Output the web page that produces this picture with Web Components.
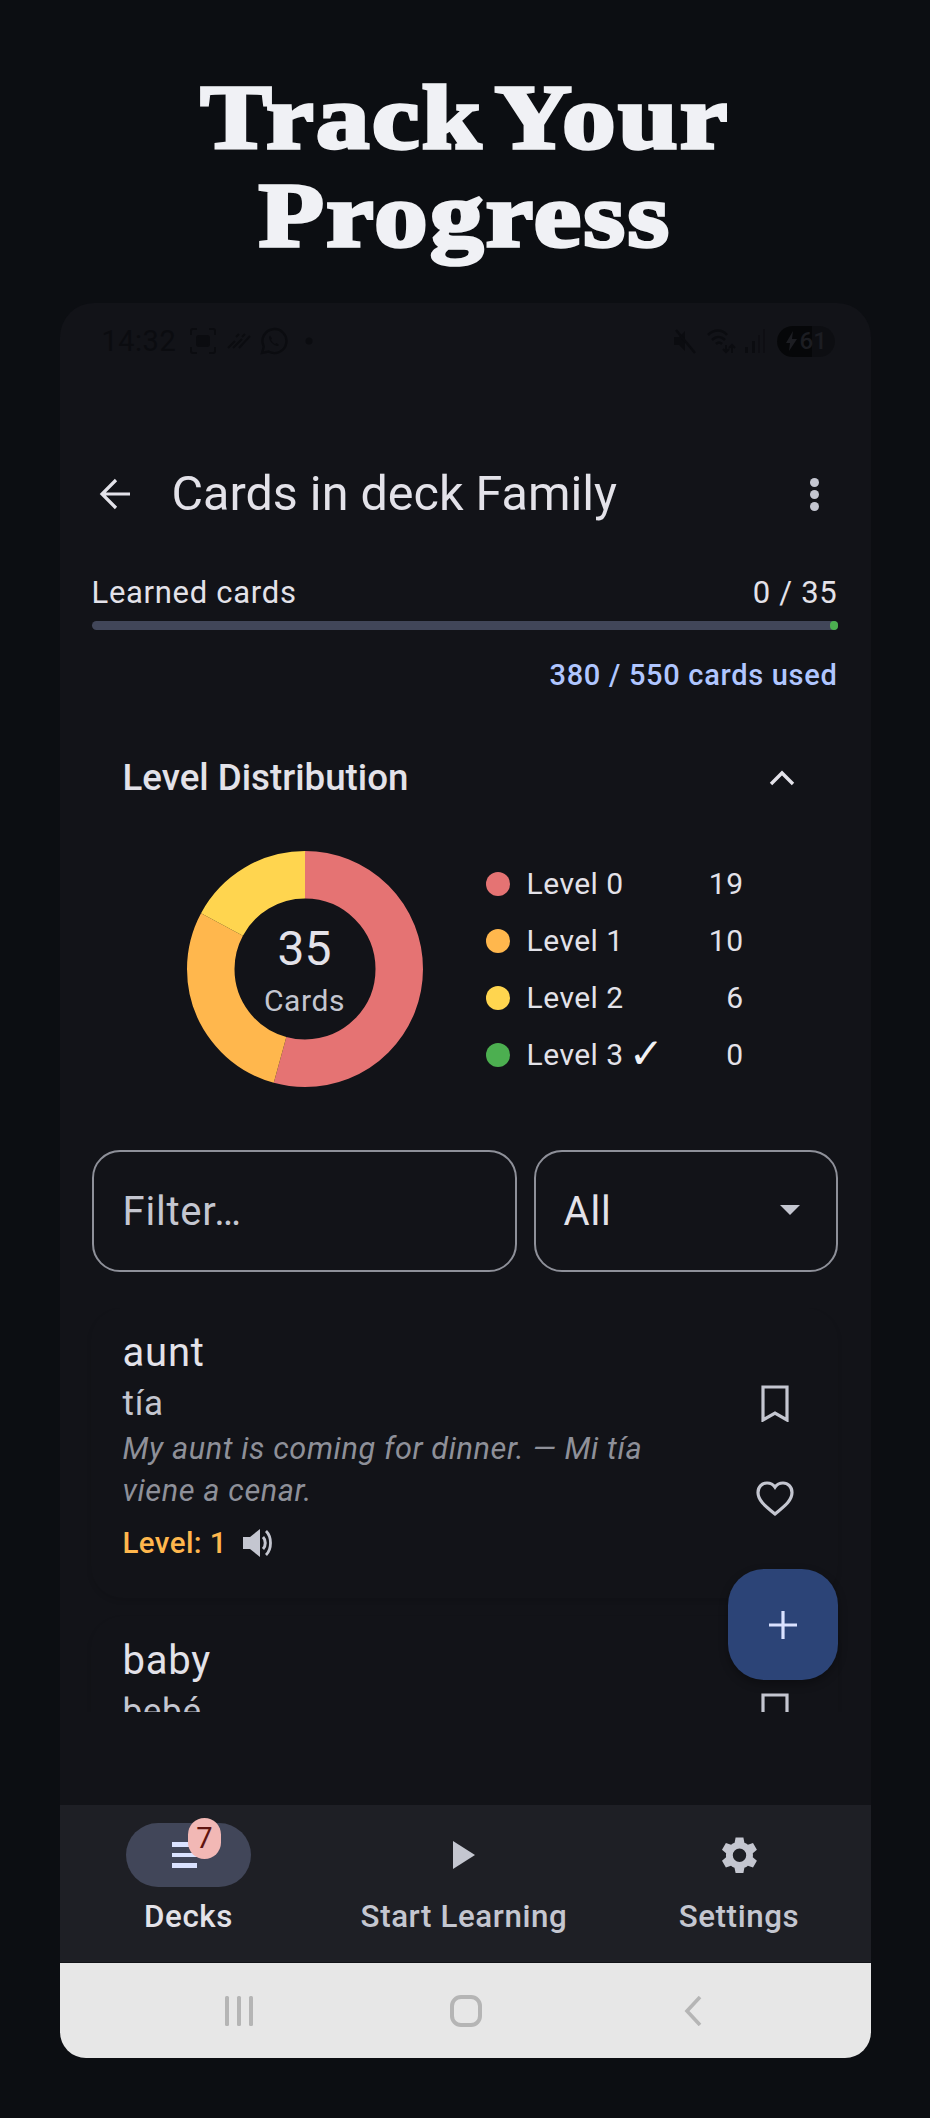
<!DOCTYPE html>
<html lang="en">
<head>
<meta charset="utf-8">
<title>Track Your Progress</title>
<style>
  html, body { margin: 0; padding: 0; background: #0c0e12; }
  body { width: 930px; height: 2118px; overflow: hidden; font-family: Roboto, "Liberation Sans", sans-serif; }
</style>
</head>
<body>
<promo-page>
  <span slot="title">Track Your<br>Progress</span>
  <phone-frame>
    <status-bar></status-bar>
    <top-bar>Cards in deck Family</top-bar>
    <learned-progress></learned-progress>
    <level-chart></level-chart>
    <filter-row></filter-row>
    <card-list>
      <word-card word="aunt" translation="tía" example="My aunt is coming for dinner. — Mi tía viene a cenar." level="Level: 1"></word-card>
      <word-card word="baby" translation="bebé"></word-card>
    </card-list>
    <bottom-nav></bottom-nav>
    <gesture-bar></gesture-bar>
  </phone-frame>
</promo-page>

<script>
const icons = {
  back: '<path d="M31 16H4M17 2 3 16l14 14" fill="none" stroke="currentColor" stroke-width="3.200"/>',
  more: '<circle cx="4.500" cy="4.500" r="4.500"/><circle cx="4.500" cy="16.500" r="4.500"/><circle cx="4.500" cy="28.500" r="4.500"/>',
  chevron: '<path d="M2 14 13 3l11 11" fill="none" stroke="currentColor" stroke-width="3.400"/>',
  bookmark: '<path d="M2 2h24v33L14 28 2 35z" fill="none" stroke="currentColor" stroke-width="3.200"/>',
  heart: '<path d="M19 33C8 24 2 19 2 11.500 2 6 6 2 11 2c3.200 0 6.200 1.500 8 4.200C20.800 3.500 23.800 2 27 2c5 0 9 4 9 9.500C36 19 30 24 19 33z" fill="none" stroke="currentColor" stroke-width="3.200"/>',
  speaker: '<path d="M0 8h7l10-8v28L7 20H0z"/><path d="M20 8c3 3 3 9 0 12" fill="none" stroke="currentColor" stroke-width="3"/><path d="M23 2c6 6 6 18 0 24" fill="none" stroke="currentColor" stroke-width="2.800"/>',
  gear: '<path d="M23.400 2.500h-7.800l-1 5.300a13 13 0 0 0-3.500 2L5.900 8 2 14.800 6.100 18.300a13 13 0 0 0 0 3.900L2 25.700l3.900 6.800 5.100-1.800a13 13 0 0 0 3.500 2l1.100 5.300h7.800l1-5.300a13 13 0 0 0 3.500-2l5.100 1.800 3.900-6.800-4.100-3.500a13 13 0 0 0 0-3.900l4.100-3.500-3.900-6.800-5.100 1.800a13 13 0 0 0-3.500-2zM19.500 13.500a6.700 6.700 0 1 1 0 13.400 6.700 6.700 0 0 1 0-13.400z" fill-rule="evenodd"/>'
};

function svg(name, w, h, vw, vh) {
  return `<svg width="${w}" height="${h}" viewBox="0 0 ${vw} ${vh}" fill="currentColor">${icons[name]}</svg>`;
}

function define(tag, html, attrs) {
  const template = document.createElement("template");
  template.innerHTML = html;
  customElements.define(tag, class extends HTMLElement {
    connectedCallback() {
      const root = this.attachShadow({ mode: "open" });
      root.appendChild(template.content.cloneNode(true));
      if (attrs) attrs(this, root);
    }
  });
}

define("promo-page", `
  <style>
    :host { display: flex; flex-direction: column; align-items: center; width: 930px; height: 2118px; color: #f0f1f5; }
    h1 {
      margin: 0; height: 303px; box-sizing: border-box; padding-top: 69px; text-align: center;
      font: 700 91px/98px "Liberation Serif", serif; letter-spacing: 2.200px; word-spacing: -12px;
      -webkit-text-stroke: 3.500px #f0f1f5; transform: scaleX(1.17);
    }
  </style>
  <h1><slot name="title"></slot></h1>
  <slot></slot>
`);

define("phone-frame", `
  <style>
    :host {
      display: flex; flex-direction: column; position: relative; box-sizing: border-box;
      width: 811px; height: 1755px; background: #121318; border-radius: 34px 34px 26px 26px; overflow: hidden;
      color: #e3e2e9; font-family: Roboto, "Liberation Sans", sans-serif;
    }
  </style>
  <slot></slot>
`);

define("status-bar", `
  <style>
    :host { display: flex; align-items: center; height: 72px; box-sizing: border-box; padding: 4px 36px 0 42px; color: #0b0c10; flex: none; }
    .time { font: 400 29px/34px Roboto, sans-serif; letter-spacing: .5px; margin-right: 14px; }
    .gap { flex: 1; }
    svg { display: block; flex: none; }
    .bat { display: flex; align-items: center; width: 58px; height: 31px; border-radius: 16px; margin-left: 11px;
      background: linear-gradient(90deg, #060709 60%, #0d0e12 60%); font: 500 24px/31px Roboto, sans-serif; color: #1c1d22; }
    .bat svg { margin: 0 3px 0 9px; }
  </style>
  <span class="time">14:32</span>
  <svg width="26" height="26" viewBox="0 0 26 26" fill="none" stroke="currentColor" stroke-width="2" style="margin-right:11px">
    <path d="M1 7V3q0-2 2-2h4M19 1h4q2 0 2 2v4M25 19v4q0 2-2 2h-4M7 25H3q-2 0-2-2v-4"/><rect x="7" y="8" width="12" height="10" rx="2" fill="currentColor"/>
  </svg>
  <svg width="24" height="16" viewBox="0 0 24 16" fill="none" stroke="currentColor" stroke-width="2" style="margin-right:9px">
    <path d="M1 15 8 8M6 15l9-9M12 15 23 3M9 4l3-3M15 4l3-3"/>
  </svg>
  <svg width="28" height="28" viewBox="0 0 28 28" fill="none" stroke="currentColor" stroke-width="2.400" style="margin-right:17px">
    <path d="M2 26l1.800-6.400A12 12 0 1 1 8.500 24.500z"/><path d="M10 8.500c-2 2 0 6 2.500 8s5 3.500 6.500 1.500l-2.500-2-1.500 1c-2-1-3-2.500-4-4l1-1.500z" fill="currentColor" stroke="none"/>
  </svg>
  <svg width="8" height="8" viewBox="0 0 8 8" fill="currentColor"><circle cx="4" cy="4" r="3.500"/></svg>
  <span class="gap"></span>
  <svg width="23" height="25" viewBox="0 0 23 25" fill="currentColor" style="margin-right:11px">
    <path d="M1 8h5l6-6v20l-6-6H1z"/><path d="M3 1l19 23" stroke="currentColor" stroke-width="2.500"/>
  </svg>
  <svg width="30" height="26" viewBox="0 0 30 26" fill="none" stroke="currentColor" stroke-width="2.500" style="margin-right:7px">
    <path d="M1 7c6-6 14-6 19 0M5 12c4-4 9-4 13 0M9 16c2-2 4-2 6 0"/><path d="M19 17v7M25 25v-7M16 21l3 3 3-3M22 20l3-3 3 3" stroke-width="2"/>
  </svg>
  <svg width="22" height="26" viewBox="0 0 22 26" fill="currentColor"><rect x="1" y="19" width="3" height="6"/><rect x="8" y="13" width="3" height="12"/><rect x="14" y="7" width="2" height="18" opacity=".6"/><rect x="19" y="1" width="2" height="24" opacity=".6"/></svg>
  <span class="bat"><svg width="11" height="20" viewBox="0 0 11 20" fill="currentColor"><path d="M7 0 0 12h4l-1 8 8-12H6z"/></svg>61</span>
`);

define("top-bar", `
  <style>
    :host { display: flex; align-items: center; height: 108px; margin-top: 65px; padding: 0 52px 0 39px; flex: none; color: #e3e2e9; }
    svg { display: block; flex: none; }
    .title { flex: 1; margin-left: 40px; font: 400 48.500px/56px Roboto, sans-serif; }
  </style>
  ${svg("back", 33, 32, 33, 32)}
  <span class="title"><slot></slot></span>
  <span style="color:#c4c6d0">${svg("more", 9, 33, 9, 33)}</span>
`);

define("learned-progress", `
  <style>
    :host { display: block; padding: 0 33px 0 32px; flex: none; }
    .row { display: flex; justify-content: space-between; font: 400 31px/36px Roboto, sans-serif; letter-spacing: .7px; margin-top: 27px; }
    .bar { height: 9px; border-radius: 5px; background: #414659; margin-top: 10px; display: flex; justify-content: flex-end; }
    .bar i { display: block; width: 8px; border-radius: 4px; background: #4caf50; }
    .used { text-align: right; font: 500 29px/36px Roboto, sans-serif; letter-spacing: .7px; color: #b0c6ff; margin-top: 27px; }
  </style>
  <div class="row"><span>Learned cards</span><span>0 / 35</span></div>
  <div class="bar"><i></i></div>
  <div class="used">380 / 550 cards used</div>
`);

define("level-chart", `
  <style>
    :host { display: block; padding: 0 32px; flex: none; }
    .head { display: flex; justify-content: space-between; align-items: center; padding: 0 44px 0 31px; margin-top: 65px; height: 40px; font: 500 36.700px/40px Roboto, sans-serif; }
    .head svg { display: block; color: #e3e2e9; }
    .body { display: flex; align-items: center; margin-top: 53px; padding-left: 95px; }
    .donut { position: relative; width: 236px; height: 236px; flex: none; }
    .donut svg { display: block; transform: rotate(-90deg); }
    .center { position: absolute; inset: 0; display: flex; flex-direction: column; align-items: center; justify-content: center; padding-top: 1px; box-sizing: border-box; }
    .num { font: 400 48px/58px Roboto, sans-serif; }
    .lbl { font: 400 30px/36px Roboto, sans-serif; color: #c4c6d0; letter-spacing: .6px; margin-top: 5px; }
    .legend { display: grid; grid-template-columns: 24px 1fr 60px; width: 258px; margin-left: 63px; grid-auto-rows: 57px; align-items: center; font: 400 30px/36px Roboto, sans-serif; letter-spacing: .5px; }
    .legend i { display: block; width: 24px; height: 24px; border-radius: 50%; }
    .legend span { padding-left: 17px; white-space: nowrap; }
    .legend b { font-weight: 400; text-align: right; }
    .legend .check { font: 400 42px/20px "DejaVu Sans", sans-serif; color: #f0f1f5; padding: 0; margin-left: -3px; vertical-align: -3px; }
  </style>
  <div class="head"><span>Level Distribution</span>${svg("chevron", 26, 17, 26, 17)}</div>
  <div class="body">
    <div class="donut">
      <svg width="236" height="236" viewBox="0 0 236 236" fill="none" stroke-width="47.500">
        <circle cx="118" cy="118" r="94.250" stroke="#e57373" pathLength="35" stroke-dasharray="19 16"/>
        <circle cx="118" cy="118" r="94.250" stroke="#ffb74d" pathLength="35" stroke-dasharray="10 25" stroke-dashoffset="-19"/>
        <circle cx="118" cy="118" r="94.250" stroke="#ffd54f" pathLength="35" stroke-dasharray="6 29" stroke-dashoffset="-29"/>
      </svg>
      <div class="center"><div class="num">35</div><div class="lbl">Cards</div></div>
    </div>
    <div class="legend">
      <i style="background:#e57373"></i><span>Level 0</span><b>19</b>
      <i style="background:#ffb74d"></i><span>Level 1</span><b>10</b>
      <i style="background:#ffd54f"></i><span>Level 2</span><b>6</b>
      <i style="background:#4caf50"></i><span>Level 3 <span class="check">✓</span></span><b>0</b>
    </div>
  </div>
`);

define("filter-row", `
  <style>
    :host { display: flex; gap: 17px; padding: 0 33px 0 32px; margin-top: 63px; flex: none; }
    .box { box-sizing: border-box; height: 122px; border: 2px solid #8e9099; border-radius: 28px; display: flex; align-items: center; font: 400 40px/48px Roboto, sans-serif; letter-spacing: .8px; }
    .box span, .filter { padding-top: 2px; }
    .filter { width: 425px; padding-left: 29px; color: #c4c6d0; }
    .select { flex: 1; padding: 0 36px 0 28px; justify-content: space-between; color: #e3e2e9; }
    .arrow { width: 0; height: 0; border-left: 10px solid transparent; border-right: 10px solid transparent; border-top: 10px solid #c4c6d0; }
  </style>
  <div class="box filter">Filter…</div>
  <div class="box select"><span>All</span><span class="arrow"></span></div>
`);

define("card-list", `
  <style>
    :host { display: flex; flex-direction: column; gap: 18px; height: 404px; overflow: hidden; margin-top: 36px; padding: 0 33px 0 31px; flex: none; }
    .fab { position: absolute; right: 33px; top: 1266px; width: 110px; height: 111px; border-radius: 36px; background: #2c4477; color: #dae2ff;
      display: flex; align-items: center; justify-content: center; box-shadow: 0 4px 10px rgba(0,0,0,.3); }
    .fab svg { display: block; }
  </style>
  <slot></slot>
  <div class="fab"><svg width="28" height="28" viewBox="0 0 28 28" fill="none" stroke="currentColor" stroke-width="3.200"><path d="M14 0v28M0 14h28"/></svg></div>
`);

define("word-card", `
  <style>
    :host { display: flex; border-radius: 32px; box-shadow: 0 3px 5px rgba(0,0,0,.1); padding: 22px 0 0 32px; height: 290px; box-sizing: border-box; flex: none; }
    .text { width: 540px; }
    .word { font: 400 40px/46px Roboto, sans-serif; letter-spacing: .8px; color: #e3e2e9; }
    .trans { font: 400 35px/44px Roboto, sans-serif; letter-spacing: .7px; color: #c4c6d0; margin-top: 6px; }
    .ex { font: italic 400 30.700px/41.600px Roboto, sans-serif; letter-spacing: .6px; color: #8e9099; margin-top: 2px; }
    .meta { display: flex; align-items: center; gap: 16px; margin-top: 14px; color: #ffb74d; font: 500 29.500px/36px Roboto, sans-serif; letter-spacing: .4px; }
    .meta span { color: #c4c6d0; display: block; height: 28px; }
    .side { flex: 1; display: flex; flex-direction: column; align-items: center; padding: 55px 0 0 50px; color: #c4c6d0; }
    .side svg { display: block; }
    .heart { margin-top: 59px; margin-left: -1px; }
  </style>
  <div class="text">
    <div class="word"></div>
    <div class="trans"></div>
    <div class="ex"></div>
    <div class="meta"><b style="font-weight:500"></b><span>${svg("speaker", 33, 28, 33, 28)}</span></div>
  </div>
  <div class="side">
    ${svg("bookmark", 28, 37, 28, 37)}
    <div class="heart">${svg("heart", 38, 36, 38, 36)}</div>
  </div>
`, (el, root) => {
  root.querySelector(".word").textContent = el.getAttribute("word");
  root.querySelector(".trans").textContent = el.getAttribute("translation");
  root.querySelector(".ex").textContent = el.getAttribute("example") || "";
  root.querySelector("b").textContent = el.getAttribute("level") || "";
});

define("bottom-nav", `
  <style>
    :host { display: grid; grid-template-columns: 258px 293px 257px; height: 157px; margin-top: 93px; background: #1e1f25; flex: none;
      font: 500 31.300px/36px Roboto, sans-serif; letter-spacing: .6px; color: #c4c6d0; text-align: center; }
    .item { display: flex; flex-direction: column; align-items: center; padding-top: 18px; position: relative; }
    .slot { height: 64px; display: flex; align-items: center; justify-content: center; }
    .label { margin-top: 12px; white-space: nowrap; }
    .active { color: #e3e2e9; }
    .pill { width: 125px; height: 64px; border-radius: 32px; background: #414659; position: relative; display: flex; align-items: center; justify-content: center; color: #dae2ff; }
    .bars { width: 25px; margin-right: 9px; display: flex; flex-direction: column; gap: 6px; }
    .bars i { display: block; height: 4.500px; background: currentColor; }
    .badge { position: absolute; left: 62px; top: -5px; width: 33px; height: 41px; border-radius: 17px; background: #f2b8b5; color: #601410;
      font: 400 29px/41px Roboto, sans-serif; letter-spacing: 0; text-align: center; }
  </style>
  <div class="item active">
    <div class="slot"><div class="pill"><div class="bars"><i></i><i></i><i></i></div><div class="badge">7</div></div></div>
    <div class="label">Decks</div>
  </div>
  <div class="item">
    <div class="slot"><svg width="22" height="28" viewBox="0 0 22 28" fill="currentColor"><path d="M0 0l22 14L0 28z"/></svg></div>
    <div class="label">Start Learning</div>
  </div>
  <div class="item">
    <div class="slot">${svg("gear", 39, 40, 39, 40)}</div>
    <div class="label">Settings</div>
  </div>
`);

define("gesture-bar", `
  <style>
    :host { display: flex; align-items: center; height: 96px; margin-top: 1px; padding-left: 165px; background: #e7e7e7; color: #b5b5b5; flex: none; box-sizing: border-box; }
    svg { display: block; }
  </style>
  <svg width="28" height="30" viewBox="0 0 28 30" fill="currentColor"><rect x="0" y="0" width="4" height="30" rx="1.500"/><rect x="12" y="0" width="4" height="30" rx="1.500"/><rect x="24" y="0" width="4" height="30" rx="1.500"/></svg>
  <svg width="32" height="32" viewBox="0 0 32 32" fill="none" stroke="currentColor" stroke-width="4" style="margin-left:197px"><rect x="2" y="2" width="28" height="28" rx="9"/></svg>
  <svg width="18" height="30" viewBox="0 0 18 30" fill="none" stroke="currentColor" stroke-width="3.600" style="margin-left:202px"><path d="M16 1 3 15l13 14"/></svg>
`);
</script>
</body>
</html>
